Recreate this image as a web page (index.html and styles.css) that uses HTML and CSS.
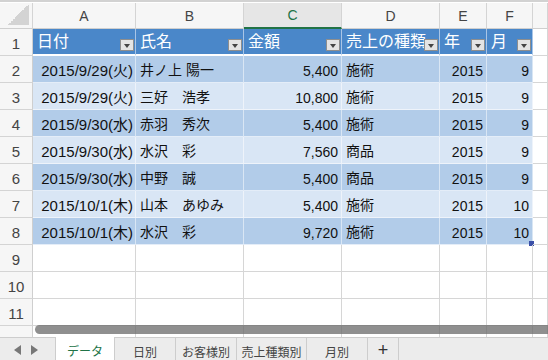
FILE: index.html
```html
<!DOCTYPE html>
<html lang="ja">
<head>
  <meta charset="UTF-8">
  <title>売上データ</title>
  <link rel="stylesheet" href="styles.css">
</head>
<body>
  <div class="sheet">
    <div class="grid">
      <div class="colhead corner"><span class="tri"></span></div>
      <div class="colhead">A</div>
      <div class="colhead">B</div>
      <div class="colhead sel">C</div>
      <div class="colhead">D</div>
      <div class="colhead">E</div>
      <div class="colhead">F</div>
      <div class="colhead"></div>

      <div class="rowhead">1</div>
      <div class="cell th">日付<span class="filter"></span></div>
      <div class="cell th">氏名<span class="filter"></span></div>
      <div class="cell th">金額<span class="filter"></span></div>
      <div class="cell th">売上の種類<span class="filter"></span></div>
      <div class="cell th">年<span class="filter"></span></div>
      <div class="cell th">月<span class="filter"></span></div>
      <div class="cell"></div>

      <div class="rowhead">2</div>
      <div class="cell dark num date">2015/9/29(火)</div>
      <div class="cell dark">井ノ上 陽一</div>
      <div class="cell dark num">5,400</div>
      <div class="cell dark">施術</div>
      <div class="cell dark num">2015</div>
      <div class="cell dark num">9</div>
      <div class="cell"></div>

      <div class="rowhead">3</div>
      <div class="cell light num date">2015/9/29(火)</div>
      <div class="cell light">三好　浩孝</div>
      <div class="cell light num">10,800</div>
      <div class="cell light">施術</div>
      <div class="cell light num">2015</div>
      <div class="cell light num">9</div>
      <div class="cell"></div>

      <div class="rowhead">4</div>
      <div class="cell dark num date">2015/9/30(水)</div>
      <div class="cell dark">赤羽　秀次</div>
      <div class="cell dark num">5,400</div>
      <div class="cell dark">施術</div>
      <div class="cell dark num">2015</div>
      <div class="cell dark num">9</div>
      <div class="cell"></div>

      <div class="rowhead">5</div>
      <div class="cell light num date">2015/9/30(水)</div>
      <div class="cell light">水沢　彩</div>
      <div class="cell light num">7,560</div>
      <div class="cell light">商品</div>
      <div class="cell light num">2015</div>
      <div class="cell light num">9</div>
      <div class="cell"></div>

      <div class="rowhead">6</div>
      <div class="cell dark num date">2015/9/30(水)</div>
      <div class="cell dark">中野　誠</div>
      <div class="cell dark num">5,400</div>
      <div class="cell dark">商品</div>
      <div class="cell dark num">2015</div>
      <div class="cell dark num">9</div>
      <div class="cell"></div>

      <div class="rowhead">7</div>
      <div class="cell light num date">2015/10/1(木)</div>
      <div class="cell light">山本　あゆみ</div>
      <div class="cell light num">5,400</div>
      <div class="cell light">施術</div>
      <div class="cell light num">2015</div>
      <div class="cell light num">10</div>
      <div class="cell"></div>

      <div class="rowhead">8</div>
      <div class="cell dark num date">2015/10/1(木)</div>
      <div class="cell dark">水沢　彩</div>
      <div class="cell dark num">9,720</div>
      <div class="cell dark">施術</div>
      <div class="cell dark num">2015</div>
      <div class="cell dark num">10<span class="handle"></span></div>
      <div class="cell"></div>

      <div class="rowhead">9</div>
      <div class="cell"></div><div class="cell"></div><div class="cell"></div><div class="cell"></div><div class="cell"></div><div class="cell"></div><div class="cell"></div>
      <div class="rowhead">10</div>
      <div class="cell"></div><div class="cell"></div><div class="cell"></div><div class="cell"></div><div class="cell"></div><div class="cell"></div><div class="cell"></div>
      <div class="rowhead">11</div>
      <div class="cell"></div><div class="cell"></div><div class="cell"></div><div class="cell"></div><div class="cell"></div><div class="cell"></div><div class="cell"></div>
      <div class="rowhead"></div>
      <div class="cell"></div><div class="cell"></div><div class="cell"></div><div class="cell"></div><div class="cell"></div><div class="cell"></div><div class="cell"></div>
    </div>
    <div class="hscroll"></div>
  </div>

  <div class="tabs">
    <div class="arrows"><span class="arr left"></span><span class="arr right"></span></div>
    <div class="tab active">データ</div>
    <div class="tab">日別</div>
    <div class="tab">お客様別</div>
    <div class="tab wide">売上種類別</div>
    <div class="tab">月別</div>
    <div class="tab plus">+</div>
  </div>
</body>
</html>
```

FILE: styles.css
```css
body { margin: 0; width: 548px; height: 360px; overflow: hidden; background: #fff; font-family: "Liberation Sans", "Noto Sans CJK JP", sans-serif; color: #111; }
.sheet { position: relative; height: 334px; overflow: hidden; border-top: 2px solid #d2d2d2; padding-top: 1px; background: #fff; }
.grid { display: grid; grid-template-columns: 33px 103px 108px 98px 98px 47px 46px 1fr; grid-template-rows: 26px repeat(12, 27px); }

.colhead { background: #f6f6f6; border-right: 1px solid #d4d4d4; border-bottom: 1px solid #cfcfcf; box-sizing: border-box; display: flex; align-items: center; justify-content: center; font-size: 14px; color: #444; }
.colhead.sel { background: #e6e6e6; color: #217346; border-bottom: 2px solid #217346; }
.corner { position: relative; background: #f6f6f6; }
.tri { position: absolute; right: 3px; bottom: 3px; width: 21px; height: 21px; background: linear-gradient(to top left, #d3d3d3 50%, transparent 50%); }

.rowhead { background: #f6f6f6; border-right: 1px solid #cfcfcf; border-bottom: 1px solid #d4d4d4; box-sizing: border-box; display: flex; align-items: center; justify-content: center; padding-top: 3px; font-size: 15px; color: #444; }

.cell { border-right: 1px solid #d6d6d6; border-bottom: 1px solid #d6d6d6; box-sizing: border-box; display: flex; align-items: flex-end; padding: 0 3px 3px 4px; font-size: 14px; white-space: nowrap; position: relative; }
.cell.num { justify-content: flex-end; padding-right: 3px; }
.cell.date { font-size: 15px; padding-right: 2px; padding-bottom: 2px; }
.th { background: #4a87c9; color: #fff; font-size: 16px; border-right-color: #a9c5e6; border-bottom: 2px solid #fff; padding-bottom: 2px; }
.dark { background: #b2cce9; border-right-color: #d9e6f4; border-bottom-color: #e4edf8; }
.light { background: #d9e6f5; border-right-color: #eef3fa; border-bottom-color: #eef3fa; }

.filter { position: absolute; right: 1px; bottom: 3px; width: 14px; height: 12px; box-sizing: border-box; background: #e4e4e4; border: 1px solid #8e8e8e; }
.filter::after { content: ""; position: absolute; left: 3px; top: 4px; border-left: 3.5px solid transparent; border-right: 3.5px solid transparent; border-top: 4px solid #444; }

.handle { position: absolute; right: -2px; bottom: -2px; width: 5px; height: 5px; background: #3a4fa8; }

.hscroll { position: absolute; left: 35px; right: 0; top: 323px; height: 9px; border-radius: 5px 0 0 5px; background: rgba(105, 105, 105, 0.75); }

.tabs { display: flex; height: 24px; background: #ececec; border-top: 1px solid #cdcdcd; font-size: 12px; color: #444; }
.arrows { width: 55px; display: flex; align-items: center; justify-content: center; gap: 10px; padding-right: 3px; box-sizing: border-box; }
.arr { width: 0; height: 0; border-top: 5px solid transparent; border-bottom: 5px solid transparent; }
.arr.left { border-right: 7px solid #777; }
.arr.right { border-left: 7px solid #777; }
.tab { width: 61px; border-right: 1px solid #cdcdcd; display: flex; align-items: center; justify-content: center; padding-top: 2px; box-sizing: border-box; }
.tab.wide { width: 70px; }
.tab.active { width: 60px; background: #fff; color: #217346; margin-top: -1px; border-left: 1px solid #cdcdcd; }
.tab.plus { width: 31px; font-size: 18px; color: #333; padding-top: 0; }
```
